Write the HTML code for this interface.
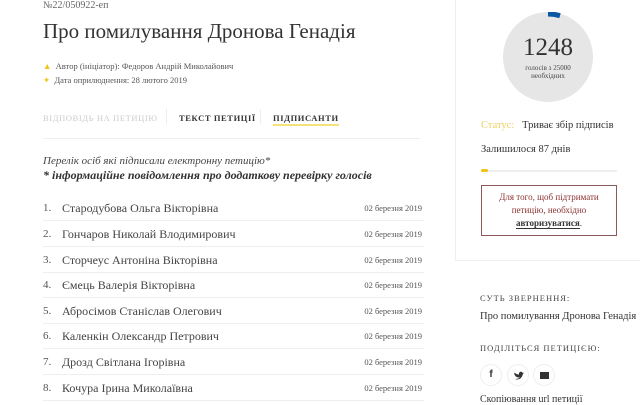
<!DOCTYPE html>
<html><head><meta charset="utf-8"><style>
*{margin:0;padding:0;box-sizing:border-box}
body{width:640px;height:404px;overflow:hidden;background:#fff;font-family:"Liberation Serif","DejaVu Serif",serif;color:#333;position:relative}
.a{position:absolute;white-space:nowrap}
.row{position:absolute;left:43px;width:381px;height:26px;border-bottom:1px solid #eee;font-size:11px}
.row .n{position:absolute;left:0;top:7px;color:#555}
.row .nm{position:absolute;left:19px;top:6px;color:#444;font-size:12px}
.row .d{position:absolute;right:2px;top:8px;font-size:8.5px;color:#555}
.cap{letter-spacing:0.6px;font-size:8.5px}
</style></head><body>
<div class="a" style="left:43px;top:0px;font-size:10px;color:#666">№22/050922-еп</div>
<div class="a" style="left:43px;top:19px;font-size:21px;color:#333">Про помилування Дронова Генадія</div>
<div class="a" style="left:43px;top:61px;font-size:8.5px;color:#555"><span style="color:#f0c419">▲</span>&nbsp; Автор (ініціатор): Федоров Андрій Миколайович</div>
<div class="a" style="left:43px;top:75px;font-size:8.5px;color:#555"><span style="color:#f0c419">✦</span>&nbsp; Дата оприлюднення: 28 лютого 2019</div>
<div class="a cap" style="left:43px;top:113px;color:#ccc">ВІДПОВІДЬ НА ПЕТИЦІЮ</div>
<div class="a" style="left:166px;top:109px;width:1px;height:15px;background:#eee"></div>
<div class="a cap" style="left:179px;top:113px;color:#333;font-weight:bold">ТЕКСТ ПЕТИЦІЇ</div>
<div class="a" style="left:260px;top:109px;width:1px;height:15px;background:#eee"></div>
<div class="a cap" style="left:273px;top:113px;color:#333;font-weight:bold;border-bottom:2px solid #f5e27a;padding-bottom:1px">ПІДПИСАНТИ</div>
<div class="a" style="left:43px;top:138px;width:377px;height:1px;background:#eee"></div>
<div class="a" style="left:43px;top:155px;font-size:11px;font-style:italic;color:#444">Перелік осіб які підписали електронну петицію*</div>
<div class="a" style="left:43px;top:168px;font-size:12px;font-style:italic;font-weight:bold;color:#333">* інформаційне повідомлення про додаткову перевірку голосів</div>
<div class="row" style="top:195px"><span class="n">1.</span><span class="nm">Стародубова Ольга Вікторівна</span><span class="d">02 березня 2019</span></div>
<div class="row" style="top:221px"><span class="n">2.</span><span class="nm">Гончаров Николай Влодимирович</span><span class="d">02 березня 2019</span></div>
<div class="row" style="top:247px"><span class="n">3.</span><span class="nm">Сторчеус Антоніна Вікторівна</span><span class="d">02 березня 2019</span></div>
<div class="row" style="top:272px"><span class="n">4.</span><span class="nm">Ємець Валерія Вікторівна</span><span class="d">02 березня 2019</span></div>
<div class="row" style="top:298px"><span class="n">5.</span><span class="nm">Абросімов Станіслав Олегович</span><span class="d">02 березня 2019</span></div>
<div class="row" style="top:323px"><span class="n">6.</span><span class="nm">Каленкін Олександр Петрович</span><span class="d">02 березня 2019</span></div>
<div class="row" style="top:349px"><span class="n">7.</span><span class="nm">Дрозд Світлана Ігорівна</span><span class="d">02 березня 2019</span></div>
<div class="row" style="top:375px"><span class="n">8.</span><span class="nm">Кочура Ірина Миколаївна</span><span class="d">02 березня 2019</span></div>

<div class="a" style="left:455px;top:0;width:1px;height:260px;background:#eee"></div>
<div class="a" style="left:455px;top:260px;width:185px;height:1px;background:#eee"></div>
<div class="a" style="left:503px;top:12px;width:90px;height:90px;border-radius:50%;background:#e6e6e6"></div>
<svg class="a" style="left:503px;top:12px" width="90" height="90"><path d="M45 2 A43 43 0 0 1 57 3.7" stroke="#0b57a4" stroke-width="5" fill="none"/></svg>
<div class="a" style="left:503px;top:34px;width:90px;text-align:center;font-size:25px;color:#333">1248</div>
<div class="a" style="left:503px;top:64px;width:90px;text-align:center;font-size:7px;color:#444;line-height:8px">голосів з 25000<br>необхідних</div>
<div class="a" style="left:481px;top:120px;font-size:10.5px"><span style="color:#f0d060">Статус:</span>&nbsp;&nbsp; <span style="color:#333">Триває збір підписів</span></div>
<div class="a" style="left:481px;top:144px;font-size:10.5px;color:#333">Залишилося 87 днів</div>
<div class="a" style="left:481px;top:170px;width:136px;height:2px;background:#eee"></div>
<div class="a" style="left:481px;top:169px;width:7px;height:3px;background:#f0c419;border-radius:2px"></div>
<div class="a" style="left:481px;top:185px;width:136px;height:51px;border:1px solid #8a5a5a;text-align:center;font-size:9px;color:#8a3030;line-height:13px;padding-top:5px;white-space:normal">Для того, щоб підтримати петицію, необхідно <b style="color:#333;border-bottom:1px solid #333">авторизуватися</b>.</div>
<div class="a cap" style="left:480px;top:293px;color:#444;font-size:8.5px;letter-spacing:1px">СУТЬ ЗВЕРНЕННЯ:</div>
<div class="a" style="left:480px;top:311px;font-size:10.5px;color:#333">Про помилування Дронова Генадія</div>
<div class="a cap" style="left:480px;top:343px;color:#444;font-size:8.5px;letter-spacing:1px">ПОДІЛІТЬСЯ ПЕТИЦІЄЮ:</div>
<div class="a" style="left:480px;top:364px;width:22px;height:22px;border-radius:50%;border:1px solid #eee;text-align:center;font:bold 10px 'Liberation Sans',sans-serif;line-height:20px;color:#333">f</div>
<div class="a" style="left:507px;top:364px;width:22px;height:22px;border-radius:50%;border:1px solid #eee"><svg width="20" height="20"><path d="M6 8 Q7 13 12 12.5 Q10 14 7 14 Q13 16 15 9 L16 7.5 L14.6 8 Q14 6 11.8 7 Q10.6 8 11 9.6 Q8.5 9.5 6.5 7.5 Q6 9 7 10 Z" fill="#333"/></svg></div>
<div class="a" style="left:533px;top:364px;width:22px;height:22px;border-radius:50%;border:1px solid #eee"><div style="position:absolute;left:6px;top:7px;width:9px;height:7px;background:#333"></div></div>
<div class="a" style="left:480px;top:394px;font-size:10px;color:#333">Скопіювання url петиції</div>
</body></html>
